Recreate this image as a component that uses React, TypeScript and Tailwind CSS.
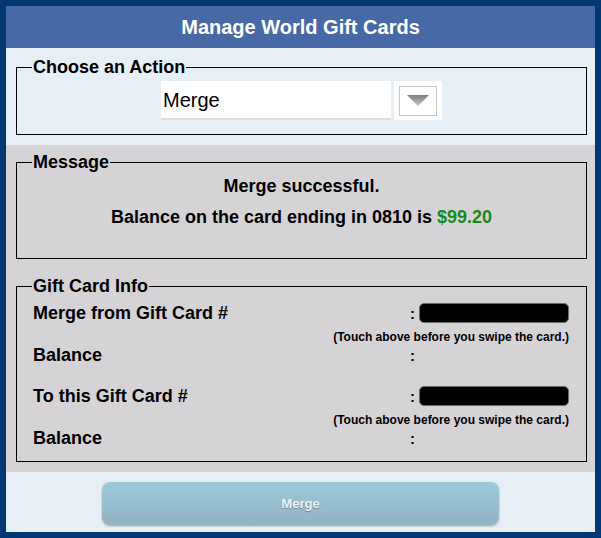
const font = { fontFamily: '"Liberation Sans", Arial, sans-serif' };

function SwipeInput() {
  return <div className="h-[20px] w-[150px] rounded-[5px] bg-black border border-[#6b6b6b]" />;
}

function Row({ label, input }: { label: string; input?: boolean }) {
  return (
    <div className="flex items-center h-[20px]">
      <div className="w-[377px] text-[18px] font-bold leading-none">{label}</div>
      <div className="w-[9px] text-[15px] font-bold leading-none">:</div>
      {input && <SwipeInput />}
    </div>
  );
}

function Hint() {
  return (
    <div className="h-[14px] flex items-center justify-end text-[12px] font-bold leading-none pr-[1px]">
      (Touch above before you swipe the card.)
    </div>
  );
}

export default function App() {
  return (
    <div className="w-[601px] h-[538px] bg-[#013872] p-[6px] text-black" style={font}>
      <div className="flex flex-col h-full">
        <div className="h-[42px] bg-[#4769a5] flex items-center justify-center text-white text-[20px] font-bold">
          Manage World Gift Cards
        </div>

        <div className="bg-[#e6eef6] pt-[9px] pb-[10px] pl-[10px] pr-[8px]">
          <fieldset className="border border-black px-[14px] pb-[14px]">
            <legend className="text-[18px] font-bold leading-[20px] px-[1px] ml-[1px]">Choose an Action</legend>
            <div className="flex justify-center gap-[3px] mt-[4px]">
              <div className="w-[230px] h-[39px] bg-white border-b-2 border-[#dedede] flex items-center pl-[2px] text-[20px]">
                Merge
              </div>
              <div className="w-[48px] h-[39px] bg-white flex items-center justify-center">
                <div className="w-[38px] h-[30px] border border-[#c6c6c6] flex items-center justify-center">
                  <svg width="22" height="11" viewBox="0 0 22 11">
                    <defs>
                      <linearGradient id="tri" x1="0" y1="0" x2="0" y2="1">
                        <stop offset="0" stopColor="#7d7d7d" />
                        <stop offset="1" stopColor="#c8c8c8" />
                      </linearGradient>
                    </defs>
                    <polygon points="0,0 22,0 11,11" fill="url(#tri)" />
                  </svg>
                </div>
              </div>
            </div>
          </fieldset>
        </div>

        <div className="bg-[#d6d3d6] pt-[7px] pb-[10px] pl-[10px] pr-[8px] flex flex-col gap-[17px]">
          <fieldset className="border border-black px-[14px] pb-[31px]">
            <legend className="text-[18px] font-bold leading-[20px] px-[1px] ml-[1px]">Message</legend>
            <div className="flex flex-col items-center text-[18px] font-bold leading-[20px] mt-[4px]">
              <div className="h-[20px]">Merge successful.</div>
              <div className="h-[20px] mt-[11px]">
                Balance on the card ending in 0810 is <span className="text-[#188a18]">$99.20</span>
              </div>
            </div>
          </fieldset>

          <fieldset className="border border-black px-[16px] pb-[13px]">
            <legend className="text-[18px] font-bold leading-[20px] px-[1px] ml-[-1px]">Gift Card Info</legend>
            <div className="flex flex-col mt-[7px]">
              <Row label="Merge from Gift Card #" input />
              <div className="mt-[7px]"><Hint /></div>
              <div className="mt-[1px]"><Row label="Balance" /></div>
              <div className="mt-[21px]"><Row label="To this Gift Card #" input /></div>
              <div className="mt-[7px]"><Hint /></div>
              <div className="mt-[1px]"><Row label="Balance" /></div>
            </div>
          </fieldset>
        </div>

        <div className="flex-1 bg-[#e6eef6] flex justify-center pt-[10px]">
          <div className="w-[397px] h-[43px] rounded-[8px] bg-gradient-to-b from-[#9ccbd9] to-[#93b2c3] shadow-[0_1px_2px_rgba(0,0,0,0.35)] flex items-center justify-center text-[13px] font-bold text-[#eef3f6] [text-shadow:0_1px_1px_rgba(80,90,100,0.6)]">
            Merge
          </div>
        </div>
      </div>
    </div>
  );
}
